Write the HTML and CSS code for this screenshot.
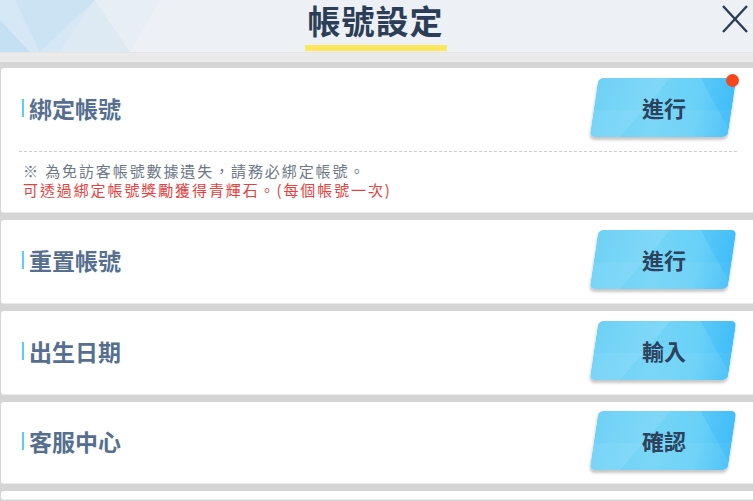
FILE: index.html
```html
<!DOCTYPE html>
<html>
    <head>
        <meta charset="UTF-8">
        <link rel="stylesheet" href="styles.css">
    </head>
    <body>
        <div id="header">
            <svg class="header-deco" width="200" height="52" viewBox="0 0 200 52">
                <polygon points="0,0 95,0 60,52 0,52" fill="#cfe6f6" opacity="0.8"/>
                <polygon points="15,0 95,0 40,52" fill="#c4e0f4" opacity="0.6"/>
                <polygon points="60,52 95,0 130,52" fill="#dae9f4" opacity="0.9"/>
                <polygon points="95,0 160,0 130,52" fill="#e5eef5" opacity="0.9"/>
                <polygon points="0,20 30,52 0,52" fill="#bedcf2" opacity="0.7"/>
            </svg>
            <div class="header-title">帳號設定</div>
            <svg class="close-icon" width="28" height="30" viewBox="0 0 28 30">
                <line x1="2" y1="2" x2="26" y2="28" stroke="#2c3e57" stroke-width="2.4"/>
                <line x1="26" y1="2" x2="2" y2="28" stroke="#2c3e57" stroke-width="2.4"/>
            </svg>
        </div>
        <div id="header-strip"></div>
        <div id="list">
            <div class="card">
                <div class="card-row">
                    <div class="card-title">綁定帳號</div>
                    <div class="btn-wrap">
                        <div class="btn"><span>進行</span></div>
                        <div class="dot"></div>
                    </div>
                </div>
                <div class="card-note">
                    <p class="note-grey">※ 為免訪客帳號數據遺失，請務必綁定帳號。</p>
                    <p class="note-red">可透過綁定帳號獎勵獲得青輝石。(每個帳號一次)</p>
                </div>
            </div>
            <div class="card">
                <div class="card-row">
                    <div class="card-title">重置帳號</div>
                    <div class="btn-wrap">
                        <div class="btn"><span>進行</span></div>
                    </div>
                </div>
            </div>
            <div class="card">
                <div class="card-row">
                    <div class="card-title">出生日期</div>
                    <div class="btn-wrap">
                        <div class="btn"><span>輸入</span></div>
                    </div>
                </div>
            </div>
            <div class="card">
                <div class="card-row short">
                    <div class="card-title">客服中心</div>
                    <div class="btn-wrap">
                        <div class="btn"><span>確認</span></div>
                    </div>
                </div>
            </div>
            <div class="card last"></div>
        </div>
    </body>
</html>
```

FILE: styles.css
```css
body {
    margin: 0;
    width: 753px;
    height: 501px;
    overflow: hidden;
    font-family: "Noto Sans CJK TC", "Noto Sans", sans-serif;
    background: #d5d5d5;
}
#header {
    position: relative;
    height: 52px;
    background: #edf1f5;
    display: flex;
    justify-content: center;
}
.header-deco {
    position: absolute;
    left: 0;
    top: 0;
}
.header-title {
    height: 51px;
    padding: 0 3px;
    margin-left: -2px;
    font-size: 33px;
    font-weight: bold;
    letter-spacing: 1px;
    line-height: 41px;
    white-space: nowrap;
    text-align: center;
    color: #2c3e57;
    border-bottom: 6px solid #fbe65c;
    box-sizing: border-box;
}
#header-strip {
    height: 10px;
    background: #ebebeb;
    border-top: 1px solid #e2e4e6;
    box-sizing: border-box;
}
.close-icon {
    position: absolute;
    right: 4px;
    top: 4px;
}
#list {
    padding-top: 6px;
    display: flex;
    flex-direction: column;
    gap: 7px;
}
.card {
    background: #fff;
    margin-left: 1px;
    border-radius: 3px 0 0 3px;
    border-bottom: 1px solid #ececec;
}
.card-row {
    height: 83px;
    display: flex;
    align-items: center;
    justify-content: space-between;
    padding-left: 21px;
}
.card-row.short {
    height: 81px;
}
.card-title {
    font-size: 23px;
    font-weight: bold;
    color: #566f90;
    border-left: 2px solid #5ccdf6;
    padding-left: 5px;
    margin-top: -4px;
    line-height: 18px;
    height: 18px;
    display: flex;
    align-items: center;
}
.btn-wrap {
    position: relative;
    width: 138px;
    height: 59px;
    margin-right: 21px;
    margin-top: -4px;
}
.btn {
    width: 100%;
    height: 100%;
    transform: skewX(-8.5deg);
    border-radius: 5px;
    background:
        linear-gradient(55deg, transparent 80%, rgba(50, 180, 250, 0.3) 80%),
        linear-gradient(125deg, rgba(255, 255, 255, 0.1) 40%, transparent 40%),
        linear-gradient(180deg, transparent 55%, rgba(255, 255, 255, 0.06) 55%),
        linear-gradient(95deg, #5fccf5 0%, #72d4f7 45%, #68d0f7 75%, #45c0f8 100%);
    box-shadow: 0 3px 3px rgba(0, 0, 0, 0.22);
    display: flex;
    align-items: center;
    justify-content: center;
}
.btn span {
    transform: skewX(8.5deg);
    font-size: 22px;
    font-weight: bold;
    color: #2c425d;
    margin-left: 2px;
    margin-top: -2px;
}
.dot {
    position: absolute;
    right: -7px;
    top: -4px;
    width: 13px;
    height: 13px;
    border-radius: 50%;
    background: #f5471c;
}
.card-note {
    margin: 0 16px 0 18px;
    border-top: 1px dashed #c9cdd2;
    padding: 9px 0 13px 4px;
}
.card-note p {
    margin: 0;
    font-size: 15px;
    line-height: 19px;
    letter-spacing: 1.9px;
}
.note-grey {
    color: #6c7787;
}
.note-red {
    color: #e8403c;
}
.card.last {
    height: 8px;
}
```
